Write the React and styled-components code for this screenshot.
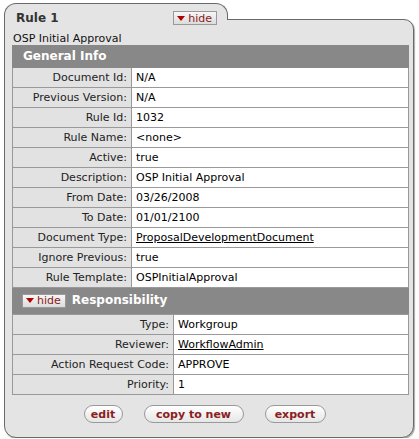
import React from "react";
import styled, { createGlobalStyle } from "styled-components";

const GlobalStyle = createGlobalStyle`
  body {
    margin: 0;
    background: #ffffff;
    font-family: "DejaVu Sans", Verdana, sans-serif;
    font-size: 11px;
    color: #000;
  }
`;

const Page = styled.div`
  padding: 3px 5px 0 4px;
  width: 410px;
`;

const Tab = styled.div`
  position: relative;
  z-index: 1;
  box-sizing: border-box;
  width: 224px;
  height: 17px;
  margin-bottom: -1px;
  background: #e4e4e4;
  border: 1px solid #6a6a6a;
  border-bottom: none;
  border-radius: 12px 12px 0 0;
  padding: 7px 10px 0 11px;
`;

const TabRow = styled.div`
  display: flex;
  align-items: center;
  justify-content: space-between;
  height: 14px;
`;

const Title = styled.span`
  font-weight: bold;
  font-size: 12px;
  color: #333;
`;

const HideButton = styled.button`
  display: inline-flex;
  align-items: center;
  gap: 3px;
  box-sizing: border-box;
  height: 14px;
  padding: 0 4px 0 3px;
  margin: ${(p) => p.$margin || "0"};
  font-family: "DejaVu Sans", Verdana, sans-serif;
  font-size: 11px;
  color: #8a1a1a;
  background: linear-gradient(#f6f6f6, #dcdcdc);
  border: 1px solid #999;
  cursor: pointer;
  line-height: 1;
`;

const Triangle = styled.span`
  width: 0;
  height: 0;
  border-left: 4px solid transparent;
  border-right: 4px solid transparent;
  border-top: 5px solid #b00000;
`;

const Body = styled.div`
  background: #e4e4e4;
  border: 1px solid #6a6a6a;
  border-radius: 0 10px 12px 12px;
  box-shadow: 1px 1px 1px #aaa;
  padding: 12px 4px 14px 7px;
`;

const Subtitle = styled.div`
  height: 13px;
  line-height: 13px;
  padding-left: 1px;
  color: #111;
`;

const Table = styled.table`
  width: 100%;
  border-collapse: collapse;
  background: #fff;
  border: 1px solid #999;
  ${(p) => p.$joined && "border-top: none;"}
  line-height: 13px;
`;

const HeaderCell = styled.th`
  background: #888888;
  color: #fff;
  font-weight: bold;
  font-size: 12px;
  text-align: left;
  height: ${(p) => p.$h || 21}px;
  padding: 0 0 0 ${(p) => p.$pl || 10}px;
  border: 1px solid #888;
`;

const HeaderInner = styled.div`
  display: flex;
  align-items: center;
`;

const Label = styled.th`
  box-sizing: border-box;
  width: ${(p) => p.$w}px;
  height: 19px;
  padding: 0 4px 0 0;
  text-align: right;
  font-weight: normal;
  color: #222;
  background: #e2e2e2;
  border: 1px solid #999;
  white-space: nowrap;
`;

const Value = styled.td`
  height: 19px;
  padding: 0 4px;
  border: 1px solid #999;
  white-space: nowrap;
`;

const Link = styled.a`
  color: #000;
  text-decoration: underline;
`;

const Actions = styled.div`
  display: flex;
  justify-content: center;
  gap: 21px;
  margin-top: 10px;
  padding-right: 12px;
`;

const PillButton = styled.button`
  box-sizing: border-box;
  height: 18px;
  width: ${(p) => p.$w}px;
  padding: 0;
  font-family: "DejaVu Sans", Verdana, sans-serif;
  font-size: 11px;
  font-weight: bold;
  color: #8a2020;
  background: linear-gradient(#ffffff, #e6e6e6);
  border: 1px solid #999;
  border-radius: 9px;
  line-height: 1;
  cursor: pointer;
`;

const general = [
  ["Document Id:", "N/A"],
  ["Previous Version:", "N/A"],
  ["Rule Id:", "1032"],
  ["Rule Name:", "<none>"],
  ["Active:", "true"],
  ["Description:", "OSP Initial Approval"],
  ["From Date:", "03/26/2008"],
  ["To Date:", "01/01/2100"],
  ["Document Type:", "ProposalDevelopmentDocument", true],
  ["Ignore Previous:", "true"],
  ["Rule Template:", "OSPInitialApproval"],
];

const responsibility = [
  ["Type:", "Workgroup"],
  ["Reviewer:", "WorkflowAdmin", true],
  ["Action Request Code:", "APPROVE"],
  ["Priority:", "1"],
];

const Hide = ({ margin }) => (
  <HideButton $margin={margin}>
    <Triangle />
    hide
  </HideButton>
);

export default function App() {
  return (
    <Page>
      <GlobalStyle />
      <Tab>
        <TabRow>
          <Title>Rule 1</Title>
          <Hide />
        </TabRow>
      </Tab>
      <Body>
        <Subtitle>OSP Initial Approval</Subtitle>
        <Table>
          <tbody>
            <tr>
              <HeaderCell colSpan={2}>General Info</HeaderCell>
            </tr>
            {general.map(([label, value, link]) => (
              <tr key={label}>
                <Label $w={119}>{label}</Label>
                <Value>{link ? <Link href="#">{value}</Link> : value}</Value>
              </tr>
            ))}
            <tr>
              <HeaderCell colSpan={2} $h={25} $pl={9}>
                <HeaderInner>
                  <Hide margin="0 6px 0 0" />
                  Responsibility
                </HeaderInner>
              </HeaderCell>
            </tr>
          </tbody>
        </Table>
        <Table $joined>
          <tbody>
            {responsibility.map(([label, value, link]) => (
              <tr key={label}>
                <Label $w={161}>{label}</Label>
                <Value>{link ? <Link href="#">{value}</Link> : value}</Value>
              </tr>
            ))}
          </tbody>
        </Table>
        <Actions>
          <PillButton $w={39}>edit</PillButton>
          <PillButton $w={100}>copy to new</PillButton>
          <PillButton $w={61}>export</PillButton>
        </Actions>
      </Body>
    </Page>
  );
}
